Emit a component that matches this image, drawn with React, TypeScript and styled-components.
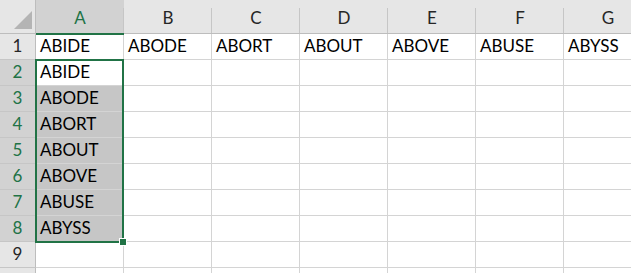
import React from "react";
import styled, { createGlobalStyle } from "styled-components";

const Global = createGlobalStyle`
  html, body { margin: 0; padding: 0; background: #fff; }
  body { font-family: Lato, "Noto Sans", sans-serif; }
`;

const GREEN = "#217346";

const Sheet = styled.div`
  position: relative;
  width: 631px;
  height: 273px;
  overflow: hidden;
  display: grid;
  grid-template-columns: 36px repeat(7, 88px);
  grid-template-rows: 34px repeat(10, 26px);
  font-family: Lato, "Noto Sans", sans-serif;
`;

const Corner = styled.div`
  background: #e6e6e6;
  border-right: 1px solid #bdbdbd;
  border-bottom: 1px solid #bdbdbd;
  display: flex;
  align-items: flex-end;
  justify-content: flex-end;
  padding: 0 3px 4px 0;
`;

const Triangle = styled.div`
  width: 0;
  height: 0;
  border-left: 18px solid transparent;
  border-bottom: 18px solid #b4b4b4;
`;

const ColHeader = styled.div<{ $sel?: boolean }>`
  background: ${(p) => (p.$sel ? "#d2d2d2" : "#e6e6e6")};
  color: ${(p) => (p.$sel ? GREEN : "#262626")};
  border-bottom: ${(p) => (p.$sel ? `2px solid ${GREEN}` : "1px solid #bdbdbd")};
  margin-bottom: ${(p) => (p.$sel ? "-1px" : "0")};
  position: relative;
  display: flex;
  align-items: flex-end;
  justify-content: center;
  padding-bottom: 5px;
  box-sizing: border-box;
  font-size: 17px;
  &::after {
    content: "";
    position: absolute;
    right: 0;
    top: 8px;
    bottom: 0;
    width: 1px;
    background: #c6c6c6;
  }
`;

const RowHeader = styled.div<{ $sel?: boolean }>`
  background: ${(p) => (p.$sel ? "#d2d2d2" : "#e6e6e6")};
  color: ${(p) => (p.$sel ? GREEN : "#262626")};
  border-right: 1px solid #bdbdbd;
  border-bottom: 1px solid #c6c6c6;
  display: flex;
  align-items: flex-end;
  justify-content: center;
  padding-bottom: 3px;
  box-sizing: border-box;
  font-size: 17px;
`;

const Cell = styled.div<{ $sel?: boolean }>`
  background: ${(p) => (p.$sel ? "#c6c6c6" : "#fff")};
  border-right: 1px solid #d4d4d4;
  border-bottom: 1px solid #d4d4d4;
  box-sizing: border-box;
  display: flex;
  align-items: flex-end;
  padding: 0 0 3px 4px;
  font-size: 17px;
  color: #000;
  white-space: nowrap;
  overflow: hidden;
`;

const Selection = styled.div`
  position: absolute;
  left: 35px;
  top: 59px;
  width: 89px;
  height: 184px;
  border: 2px solid ${GREEN};
  box-sizing: border-box;
  pointer-events: none;
`;

const Handle = styled.div`
  position: absolute;
  right: -5px;
  bottom: -5px;
  width: 8px;
  height: 8px;
  background: ${GREEN};
  border: 1px solid #fff;
  box-sizing: border-box;
`;

const cols = ["A", "B", "C", "D", "E", "F", "G"];
const words = ["ABIDE", "ABODE", "ABORT", "ABOUT", "ABOVE", "ABUSE", "ABYSS"];

export default function App() {
  const rows = Array.from({ length: 10 }, (_, i) => i + 1);
  return (
    <>
      <Global />
      <Sheet>
        <Corner>
          <Triangle />
        </Corner>
        {cols.map((c) => (
          <ColHeader key={c} $sel={c === "A"}>
            {c}
          </ColHeader>
        ))}
        {rows.map((r) => (
          <React.Fragment key={r}>
            <RowHeader $sel={r >= 2 && r <= 8}>{r <= 9 ? r : ""}</RowHeader>
            {cols.map((c, ci) => {
              let text = "";
              if (r === 1) text = words[ci];
              else if (ci === 0 && r >= 2 && r <= 8) text = words[r - 2];
              return (
                <Cell key={c} $sel={ci === 0 && r >= 3 && r <= 8}>
                  {text}
                </Cell>
              );
            })}
          </React.Fragment>
        ))}
        <Selection>
          <Handle />
        </Selection>
      </Sheet>
    </>
  );
}
